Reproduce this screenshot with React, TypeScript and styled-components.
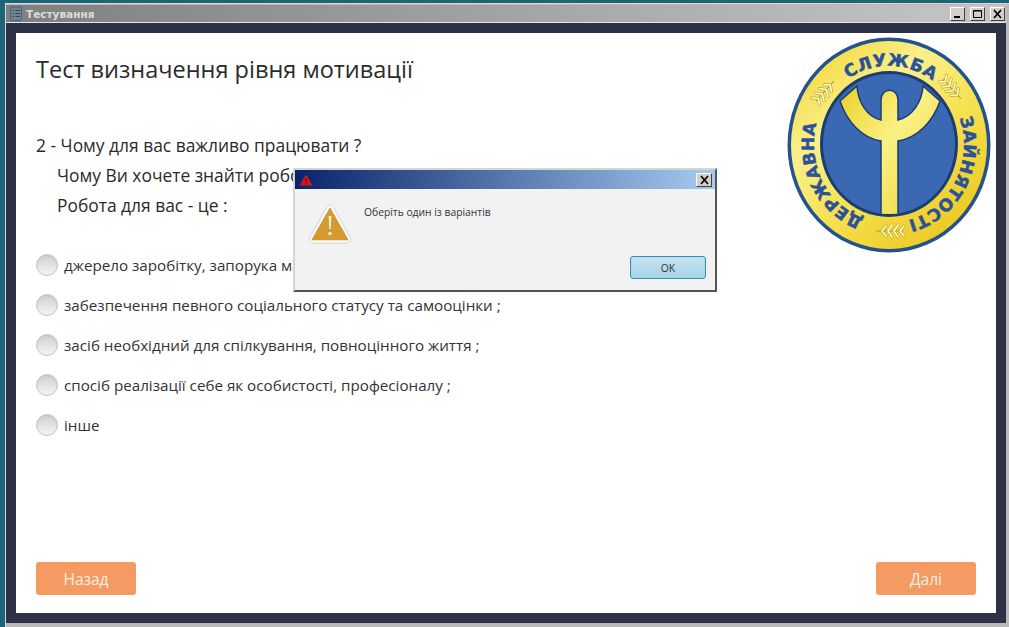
import styled, { createGlobalStyle } from "styled-components";

const GlobalStyle = createGlobalStyle`
  html, body {
    margin: 0;
    padding: 0;
    background: #1d6478;
  }
  * {
    box-sizing: border-box;
  }
`;

const Desktop = styled.div`
  width: 1009px;
  height: 627px;
  padding: 3px 0 0 5px;
  position: relative;
  overflow: hidden;
  background: #1d6478;
  font-family: "Open Sans", "Noto Sans", sans-serif;
`;

const WindowBox = styled.div`
  height: 100%;
  display: flex;
  flex-direction: column;
  background: #b9b9b9;
  border-top: 1px solid #d8d8d8;
  border-left: 1px solid #d8d8d8;
  padding: 1px 3px 4px 0;
`;

const TitleBar = styled.div`
  height: 18px;
  flex: none;
  display: flex;
  align-items: center;
  gap: 4px;
  padding: 0 1px 0 4px;
  background: linear-gradient(90deg, #7f7f7f 0%, #a3a3a3 50%, #c6c6c6 100%);
  border-bottom: 1px solid #e6e6e6;
`;

const TitleText = styled.span`
  flex: 1;
  font-family: "DejaVu Sans", sans-serif;
  font-size: 10.5px;
  font-weight: 700;
  color: #dcdcdc;
`;

const WinButton = styled.button`
  width: 15px;
  height: 14px;
  padding: 0;
  margin-left: 1px;
  display: flex;
  align-items: center;
  justify-content: center;
  background: #d4d0c8;
  border: 1px solid;
  border-color: #fff #404040 #404040 #fff;
`;

const Frame = styled.div`
  flex: 1;
  min-height: 0;
  background: #2d3247;
  padding: 10px;
  display: flex;
`;

const Panel = styled.div`
  flex: 1;
  position: relative;
  background: #fff;
  display: flex;
  flex-direction: column;
  padding: 18px 20px 18px;
  color: #2a2a2a;
`;

const Heading = styled.h1`
  margin: 0 0 43px;
  font-size: 23.5px;
  line-height: 36px;
  font-weight: 400;
  color: #2b2b2b;
`;

const QuestionBlock = styled.div`
  display: flex;
  flex-direction: column;
  margin-bottom: 34px;
`;

const QuestionLine = styled.div<{ $indent?: boolean }>`
  font-size: 17.4px;
  line-height: 30px;
  padding-left: ${(p) => (p.$indent ? "21px" : "0")};
`;

const OptionList = styled.div`
  display: flex;
  flex-direction: column;
  gap: 18px;
`;

const OptionRow = styled.label`
  display: flex;
  align-items: center;
  gap: 6px;
  height: 22px;
  font-size: 15.2px;
  color: #333;
`;

const Radio = styled.span`
  width: 22px;
  height: 22px;
  border-radius: 50%;
  flex: none;
  border: 1px solid #c4c4c4;
  background: linear-gradient(180deg, #d0d0d0 0%, #e6e6e6 60%, #f2f2f2 100%);
  box-shadow: inset 0 1px 2px rgba(0, 0, 0, 0.08);
`;

const Footer = styled.div`
  margin-top: auto;
  display: flex;
  justify-content: space-between;
`;

const NavButton = styled.button`
  width: 100px;
  height: 33px;
  border: 0;
  border-radius: 3px;
  background: #f49b63;
  color: #fdeee0;
  font-family: "Open Sans", sans-serif;
  font-size: 15.5px;
`;

const LogoWrap = styled.div`
  position: absolute;
  right: 5px;
  top: 4px;
  width: 204px;
  height: 216px;
`;

const Dialog = styled.div`
  position: absolute;
  left: 293px;
  top: 168px;
  width: 424px;
  height: 124px;
  display: flex;
  flex-direction: column;
  background: #f2f2f2;
  border: 2px solid;
  border-color: #d6d6d0 #555 #555 #d6d6d0;
`;

const DialogBar = styled.div`
  height: 19px;
  flex: none;
  display: flex;
  align-items: center;
  justify-content: space-between;
  padding: 0 3px 0 4px;
  background: linear-gradient(90deg, #0a246a 0%, #a6caf0 100%);
`;

const DialogClose = styled.button`
  width: 16px;
  height: 14px;
  padding: 0;
  display: flex;
  align-items: center;
  justify-content: center;
  background: #d4d0c8;
  border: 1px solid;
  border-color: #fff #404040 #404040 #fff;
`;

const DialogBody = styled.div`
  flex: 1;
  display: flex;
  gap: 12px;
  padding: 14px 0 0 13px;
`;

const DialogText = styled.div`
  font-family: "Open Sans", sans-serif;
  font-size: 10.3px;
  line-height: 14px;
  color: #333;
  padding-top: 2px;
`;

const DialogFooter = styled.div`
  display: flex;
  justify-content: flex-end;
  padding: 0 9px 11px 0;
`;

const OkButton = styled.button`
  width: 76px;
  height: 23px;
  padding: 0;
  border: 1px solid #3c8fb0;
  border-radius: 3px;
  background: linear-gradient(180deg, #c6e3f1 0%, #a9d3e8 100%);
  box-shadow: inset 0 0 2px #7fdcf5;
  font-family: "Open Sans", sans-serif;
  font-size: 10.3px;
  color: #333;
`;

const AppIcon = () => (
  <svg width="12" height="15" viewBox="0 0 12 15">
    <rect x="0.5" y="1" width="11" height="13.5" rx="1" fill="#6f8593" stroke="#4a6473" />
    <path d="M2.5 4.5h1.5M5.5 4.5h4.5M2.5 7.5h1.5M5.5 7.5h4.5M2.5 10.5h1.5M5.5 10.5h4.5" stroke="#2f4a5a" />
  </svg>
);

const MinIcon = () => (
  <svg width="11" height="10" viewBox="0 0 11 10">
    <rect x="2" y="7" width="6" height="2" fill="#000" />
  </svg>
);

const MaxIcon = () => (
  <svg width="11" height="10" viewBox="0 0 11 10">
    <path d="M1.5 1.5h8v7h-8z M1.5 2h8" fill="none" stroke="#000" />
  </svg>
);

const CloseIcon = () => (
  <svg width="11" height="10" viewBox="0 0 11 10">
    <path d="M2 1l7 8M9 1l-7 8" stroke="#000" strokeWidth="1.7" />
  </svg>
);

const SmallWarning = () => (
  <svg width="14" height="12" viewBox="0 0 14 12">
    <path d="M7 0.5L13.5 11.5H0.5z" fill="#d8141c" />
    <path d="M7 4v4M7 9v1.5" stroke="#5a0a10" strokeWidth="1.2" />
  </svg>
);

const WarningIcon = () => (
  <svg width="44" height="42" viewBox="0 0 44 42">
    <path
      d="M22 2 C23.5 2 24.5 3 25.5 4.5 L42 34 C43.5 37 42 40 38.5 40 H5.5 C2 40 0.5 37 2 34 L18.5 4.5 C19.5 3 20.5 2 22 2z"
      fill="#fbfbfb"
      stroke="#d4d4d4"
    />
    <path d="M22 5.5 L39.5 36.5 H4.5z" fill="#d29a30" stroke="#d29a30" strokeLinejoin="round" strokeWidth="1.5" />
    <path d="M20.6 13h2.8l-.7 13h-1.4z" fill="#f7efdc" />
    <circle cx="22" cy="30.5" r="1.7" fill="#f7efdc" />
  </svg>
);

// one wheat sprig on the ring of the emblem, with a gold shadow under the pale strokes
const sprig = "M-10 0l-4 -5M-10 0l-4 5M-4 0l-4 -6M-4 0l-4 6M2 0l-4 -6M2 0l-4 6M8 0l-4 -5M8 0l-4 5";

const Wheat = ({ x, y, angle }: { x: number; y: number; angle: number }) => (
  <g transform={`translate(${x} ${y}) rotate(${angle})`} strokeLinecap="round" fill="none">
    <path d="M-13 0H13" stroke="#b99c1c" strokeWidth="1" />
    <path d={sprig} stroke="#c6a822" strokeWidth="3" />
    <path d={sprig} stroke="#fffde0" strokeWidth="1.6" />
  </g>
);

const Logo = () => (
  <svg width="204" height="216" viewBox="0 0 204 216">
    <defs>
      <linearGradient id="ring" x1="0.15" y1="0.05" x2="0.85" y2="0.95">
        <stop offset="0" stopColor="#f4da3e" />
        <stop offset="0.28" stopColor="#faf08c" />
        <stop offset="0.6" stopColor="#f6e04e" />
        <stop offset="1" stopColor="#ebc820" />
      </linearGradient>
      <linearGradient id="fork" x1="0" y1="0" x2="1" y2="1">
        <stop offset="0" stopColor="#ecd023" />
        <stop offset="0.45" stopColor="#faf186" />
        <stop offset="1" stopColor="#eed42c" />
      </linearGradient>
      <clipPath id="inner">
        <ellipse cx="102" cy="107" rx="66" ry="70" />
      </clipPath>
      <path id="ringPath" d="M102 186 A75 78.5 0 1 1 102 29 A75 78.5 0 1 1 102 186" />
    </defs>
    <ellipse cx="102" cy="108" rx="101.5" ry="107.5" fill="#24528f" />
    <ellipse cx="102" cy="108" rx="98" ry="104" fill="url(#ring)" />
    <ellipse cx="102" cy="107" rx="69" ry="73" fill="#1b3c72" />
    <ellipse cx="102" cy="107" rx="66" ry="70" fill="#3a68b3" />
    <g clipPath="url(#inner)">
      <path
        d="M53 64 C60 85 75 101 94 104 V178 H111 V104 C130 101 146 85 153 64 L136 49 C135 65 125 80 111 83 V63 C111 50 94 50 94 63 V83 C80 80 71 65 70 49z"
        fill="url(#fork)"
        stroke="#1b3c72"
        strokeWidth="1.5"
      />
    </g>
    <g fontFamily="'DejaVu Sans', sans-serif" fontWeight="700" fontSize="17" fill="#2b5299" stroke="#2b5299" strokeWidth="0.5">
      <text>
        <textPath href="#ringPath" startOffset="5.3%" textLength="116" lengthAdjust="spacing">ДЕРЖАВНА</textPath>
      </text>
      <text>
        <textPath href="#ringPath" startOffset="41%" textLength="90" lengthAdjust="spacing">СЛУЖБА</textPath>
      </text>
      <text>
        <textPath href="#ringPath" startOffset="69.4%" textLength="128" lengthAdjust="spacing">ЗАЙНЯТОСТІ</textPath>
      </text>
    </g>
    <Wheat x={38} y={54} angle={-48} />
    <Wheat x={165} y={52} angle={48} />
    <Wheat x={103} y={194} angle={180} />
  </svg>
);

const options = [
  "джерело заробітку, запорука матеріального благополуччя ;",
  "забезпечення певного соціального статусу та самооцінки ;",
  "засіб необхідний для спілкування, повноцінного життя ;",
  "спосіб реалізації себе як особистості, професіоналу ;",
  "інше",
];

export default function App() {
  return (
    <Desktop>
      <GlobalStyle />
      <WindowBox>
        <TitleBar>
          <AppIcon />
          <TitleText>Тестування</TitleText>
          <WinButton type="button"><MinIcon /></WinButton>
          <WinButton type="button"><MaxIcon /></WinButton>
          <WinButton type="button"><CloseIcon /></WinButton>
        </TitleBar>
        <Frame>
          <Panel>
            <Heading>Тест визначення рівня мотивації</Heading>
            <QuestionBlock>
              <QuestionLine>2 - Чому для вас важливо працювати ?</QuestionLine>
              <QuestionLine $indent>Чому Ви хочете знайти роботу ?</QuestionLine>
              <QuestionLine $indent>Робота для вас - це :</QuestionLine>
            </QuestionBlock>
            <OptionList>
              {options.map((text) => (
                <OptionRow key={text}>
                  <Radio />
                  {text}
                </OptionRow>
              ))}
            </OptionList>
            <Footer>
              <NavButton type="button">Назад</NavButton>
              <NavButton type="button">Далі</NavButton>
            </Footer>
            <LogoWrap>
              <Logo />
            </LogoWrap>
          </Panel>
        </Frame>
      </WindowBox>
      <Dialog>
        <DialogBar>
          <SmallWarning />
          <DialogClose type="button"><CloseIcon /></DialogClose>
        </DialogBar>
        <DialogBody>
          <WarningIcon />
          <DialogText>Оберіть один із варіантів</DialogText>
        </DialogBody>
        <DialogFooter>
          <OkButton type="button">OK</OkButton>
        </DialogFooter>
      </Dialog>
    </Desktop>
  );
}
